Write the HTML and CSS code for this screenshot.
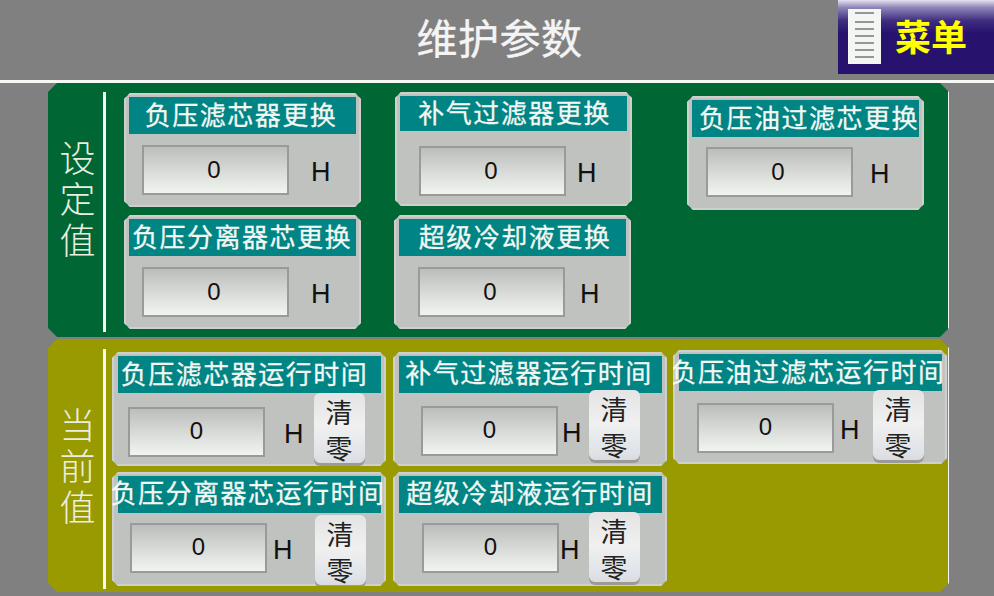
FILE: index.html
```html
<!DOCTYPE html>
<html lang="zh-CN">
<head>
  <meta charset="UTF-8" />
  <title>维护参数</title>
  <link rel="stylesheet" href="styles.css">
</head>
<body>
  <header class="top-bar">
    <h1>维护参数</h1>
    <button class="menu-btn">
      <svg class="menu-icon" width="33" height="55" viewBox="0 0 33 55">
        <rect x="0" y="0" width="33" height="55" fill="#f4f6f4"/>
        <g stroke="#777" stroke-width="1.5">
          <path d="M7 4H26M7 13H26M7 20H26M7 27H26M7 34H26M7 41H26M7 48H26"/>
        </g>
      </svg>
      <span>菜单</span>
    </button>
  </header>

  <section class="panel panel-set">
    <div class="side">设<br>定<br>值</div>
    <div class="divider"></div>
    <div class="cards">
      <div class="card set-a">
        <div class="card-title">负压滤芯器更换</div>
        <div class="card-row"><div class="value">0</div><div class="unit">H</div></div>
      </div>
      <div class="card set-b">
        <div class="card-title">补气过滤器更换</div>
        <div class="card-row"><div class="value">0</div><div class="unit">H</div></div>
      </div>
      <div class="card set-c">
        <div class="card-title">负压油过滤芯更换</div>
        <div class="card-row"><div class="value">0</div><div class="unit">H</div></div>
      </div>
      <div class="card set-d">
        <div class="card-title">负压分离器芯更换</div>
        <div class="card-row"><div class="value">0</div><div class="unit">H</div></div>
      </div>
      <div class="card set-e">
        <div class="card-title">超级冷却液更换</div>
        <div class="card-row"><div class="value">0</div><div class="unit">H</div></div>
      </div>
    </div>
  </section>

  <section class="panel panel-now">
    <div class="side">当<br>前<br>值</div>
    <div class="divider"></div>
    <div class="cards">
      <div class="card now-a">
        <div class="card-title">负压滤芯器运行时间</div>
        <div class="card-row"><div class="value">0</div><div class="unit">H</div><button class="clear-btn">清<br>零</button></div>
      </div>
      <div class="card now-b">
        <div class="card-title">补气过滤器运行时间</div>
        <div class="card-row"><div class="value">0</div><div class="unit">H</div><button class="clear-btn">清<br>零</button></div>
      </div>
      <div class="card now-c">
        <div class="card-title">负压油过滤芯运行时间</div>
        <div class="card-row"><div class="value">0</div><div class="unit">H</div><button class="clear-btn">清<br>零</button></div>
      </div>
      <div class="card now-d">
        <div class="card-title">负压分离器芯运行时间</div>
        <div class="card-row"><div class="value">0</div><div class="unit">H</div><button class="clear-btn">清<br>零</button></div>
      </div>
      <div class="card now-e">
        <div class="card-title">超级冷却液运行时间</div>
        <div class="card-row"><div class="value">0</div><div class="unit">H</div><button class="clear-btn">清<br>零</button></div>
      </div>
    </div>
  </section>
</body>
</html>
```

FILE: styles.css
```css
body {
  margin: 0;
  height: 596px;
  overflow: hidden;
  background: #808080;
  font-family: "Noto Sans CJK SC", "Liberation Sans", sans-serif;
}
.top-bar {
  height: 80px;
  border-bottom: 3px solid #f6f8f4;
  display: flex;
  justify-content: space-between;
  position: relative;
}
.top-bar h1 {
  margin: 0;
  width: 999px;
  flex-shrink: 0;
  text-align: center;
  color: #f4f4f4;
  font-size: 41px;
  font-weight: 400;
  letter-spacing: 0.5px;
  -webkit-text-stroke: 0.4px #f4f4f4;
  line-height: 73px;
}
.menu-btn {
  position: absolute;
  top: 0;
  left: 838px;
  width: 156px;
  height: 74px;
  padding: 9px 0 0 10px;
  border: none;
  display: flex;
  align-items: flex-start;
  background: linear-gradient(#e6e2f0 0, #8f86b8 10%, #3f2d80 28%, #27126e 45%, #27126e 100%);
  font-family: inherit;
}
.menu-btn span {
  margin: 1px 0 0 14px;
  color: #ffff00;
  font-size: 36px;
  font-weight: 700;
  line-height: 50px;
}
.panel {
  width: 901px;
  margin-left: 48px;
  display: flex;
  align-items: flex-start;
  box-shadow: inset -1px 0 #f4f6f4;
  clip-path: polygon(9px 0, calc(100% - 9px) 0, 100% 9px, 100% calc(100% - 9px), calc(100% - 9px) 100%, 9px 100%, 0 calc(100% - 9px), 0 9px);
}
.panel-set {
  height: 254px;
  background: #006633;
}
.panel-now {
  height: 253px;
  margin-top: 2px;
  background: #999900;
}
.side {
  width: 55px;
  padding-left: 4px;
  box-sizing: border-box;
  text-align: center;
  color: #e8efe0;
  font-size: 36px;
  font-weight: 300;
  line-height: 41px;
}
.panel-set .side { padding-top: 53px; }
.panel-now .side { padding-top: 64px; }
.divider {
  width: 3px;
  height: 240px;
  background: #f6f8f4;
}
.panel-set .divider { margin-top: 9px; }
.panel-now .divider { margin-top: 10px; }
.cards {
  display: grid;
}
.panel-set .cards {
  margin: 9px 0 0 18px;
  grid-template-columns: 270px 293px 237px;
  grid-template-rows: 123px 114px;
}
.panel-now .cards {
  margin: 11px 0 0 6px;
  grid-template-columns: 281px 280px 274px;
  grid-template-rows: 122px 114px;
}
.card {
  box-sizing: border-box;
  width: 237px;
  height: 114px;
  padding: 4px 5px;
  background: #bfc2bf;
  box-shadow: inset 0 0 0 2px #cdd0cd;
  clip-path: polygon(6px 0, calc(100% - 6px) 0, 100% 6px, 100% calc(100% - 6px), calc(100% - 6px) 100%, 6px 100%, 0 calc(100% - 6px), 0 6px);
}
.panel-now .card {
  width: 274px;
  padding-left: 6px;
}
.card-title {
  box-sizing: border-box;
  height: var(--title-h, 37px);
  padding: 0 var(--title-r, 0) var(--title-b, 3px) var(--title-l, 0);
  display: flex;
  justify-content: center;
  align-items: center;
  white-space: nowrap;
  background: #008484;
  color: #f4f8f4;
  font-size: 26px;
  letter-spacing: 1.5px;
  -webkit-text-stroke: 0.3px #f4f8f4;
  line-height: 34px;
}
.card-row {
  display: flex;
  align-items: flex-start;
  margin-left: var(--value-x);
  margin-top: var(--value-y);
}
.value {
  box-sizing: border-box;
  width: 147px;
  height: 50px;
  border: 2px solid #9a9a9a;
  background: linear-gradient(#bcbebc, #f1f5f0);
  text-align: center;
  color: #111;
  font-family: "Liberation Sans", sans-serif;
  font-size: 24px;
  line-height: 44px;
}
.panel-set .value {
  padding-right: 3px;
  line-height: 46px;
}
.panel-now .value {
  width: 137px;
}
.unit {
  margin-left: var(--unit-x);
  margin-top: var(--unit-y, 12px);
  color: #111;
  font-family: "Liberation Sans", sans-serif;
  font-size: 27px;
  line-height: 30px;
}
.clear-btn {
  box-sizing: border-box;
  width: 51px;
  height: 73px;
  margin-left: var(--btn-x);
  margin-top: var(--btn-y);
  padding: 0;
  border: none;
  border-radius: 6px;
  background: linear-gradient(#e4e4e4, #f0f0f0 45%, #dfe3e8 85%, #d8d8d8);
  box-shadow: inset 0 -3px #9a9a9a;
  color: #222;
  font-family: inherit;
  font-size: 27px;
  line-height: 36px;
}
.set-a { margin-top: 1px; --title-r: 3px; --value-x: 13px; --value-y: 11px; --unit-x: 22px; }
.set-b { margin-left: 1px; --title-h: 35px; --title-l: 2px; --value-x: 19px; --value-y: 15px; --unit-x: 11px; }
.set-c { margin-top: 4px; --title-l: 7px; --value-x: 14px; --value-y: 10px; --unit-x: 17px; }
.set-d { --title-r: 1px; --value-x: 13px; --value-y: 11px; --unit-x: 22px; }
.set-e { --title-l: 5px; --value-x: 19px; --value-y: 11px; --unit-x: 15px; }
.now-a { margin-top: 2px; --title-r: 10px; --value-x: 10px; --value-y: 14px; --unit-x: 19px; --btn-x: 10px; --btn-y: -14px; }
.now-b { margin-top: 2px; --title-r: 3px; --title-b: 6px; --value-x: 22px; --value-y: 13px; --unit-x: 4px; --btn-x: 7px; --btn-y: -16px; }
.now-c { --title-r: 5px; --value-x: 18px; --value-y: 12px; --unit-x: 6px; --btn-x: 13px; --btn-y: -13px; }
.now-d { --title-r: 3px; --title-b: 5px; --value-x: 12px; --value-y: 10px; --unit-x: 6px; --btn-x: 22px; --btn-y: -8px; }
.now-e { --title-r: 1px; --title-b: 6px; --value-x: 23px; --value-y: 10px; --unit-x: 1px; --btn-x: 9px; --btn-y: -11px; }
```
